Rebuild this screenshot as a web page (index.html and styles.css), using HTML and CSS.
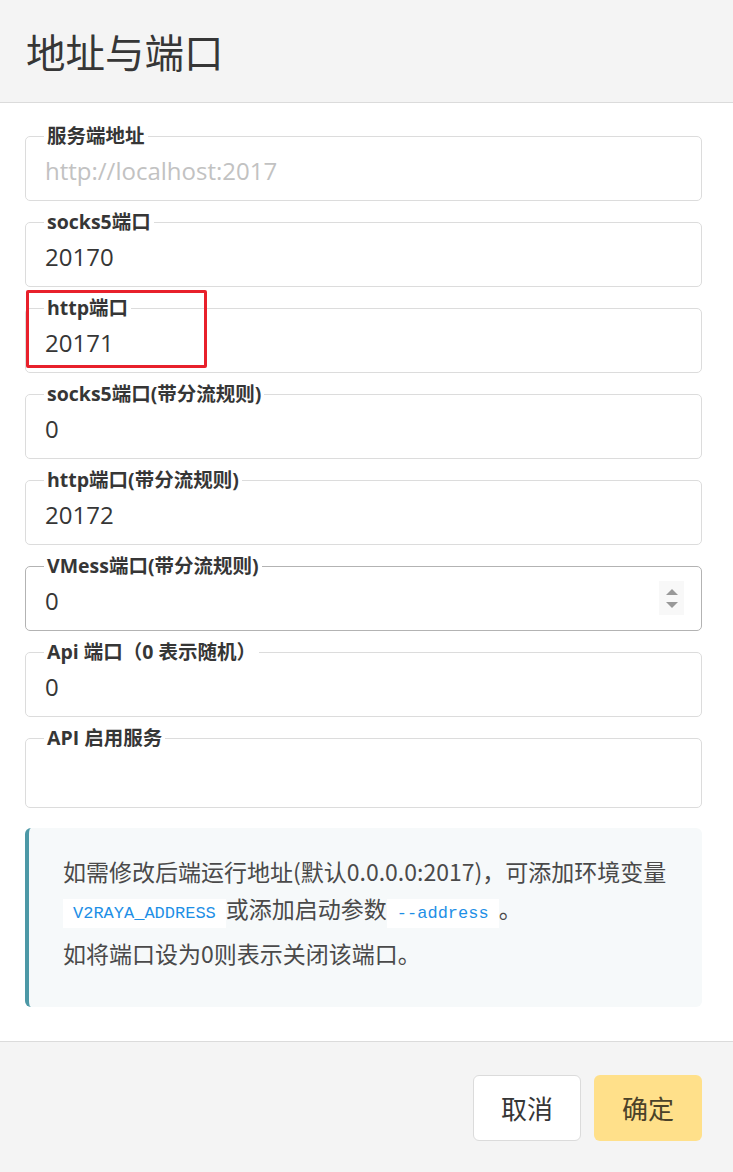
FILE: index.html
```html
<!DOCTYPE html>
<html lang="zh-CN">
<head>
<meta charset="utf-8">
<title>地址与端口</title>
<link rel="stylesheet" href="styles.css">
</head>
<body>
<div class="modal">
  <header class="modal-head">
    <h1 class="modal-title">地址与端口</h1>
  </header>
  <section class="modal-body">
    <fieldset class="field">
      <legend class="field-label">服务端地址</legend>
      <input class="field-input" type="text" placeholder="http://localhost:2017">
    </fieldset>
    <fieldset class="field">
      <legend class="field-label">socks5端口</legend>
      <input class="field-input" type="text" value="20170">
    </fieldset>
    <fieldset class="field">
      <legend class="field-label">http端口</legend>
      <input class="field-input" type="text" value="20171">
    </fieldset>
    <fieldset class="field">
      <legend class="field-label">socks5端口(带分流规则)</legend>
      <input class="field-input" type="text" value="0">
    </fieldset>
    <fieldset class="field">
      <legend class="field-label">http端口(带分流规则)</legend>
      <input class="field-input" type="text" value="20172">
    </fieldset>
    <fieldset class="field field-active">
      <legend class="field-label">VMess端口(带分流规则)</legend>
      <div class="input-row">
        <input class="field-input" type="text" value="0">
        <div class="spinner">
          <span class="spin-up"></span>
          <span class="spin-down"></span>
        </div>
      </div>
    </fieldset>
    <fieldset class="field">
      <legend class="field-label">Api 端口（0 表示随机）</legend>
      <input class="field-input" type="text" value="0">
    </fieldset>
    <fieldset class="field field-last">
      <legend class="field-label">API 启用服务</legend>
      <div class="field-empty"></div>
    </fieldset>
    <div class="notification">
      <p>如需修改后端运行地址(默认0.0.0.0:2017)，可添加环境变量<br><code class="code">V2RAYA_ADDRESS</code>或添加启动参数<code class="code">--address</code>。</p>
      <p>如将端口设为0则表示关闭该端口。</p>
    </div>
    <div class="highlight"></div>
  </section>
  <footer class="modal-foot">
    <button class="btn btn-cancel" type="button">取消</button>
    <button class="btn btn-confirm" type="button">确定</button>
  </footer>
</div>
</body>
</html>
```
FILE: styles.css
```css
html, body {
  margin: 0;
  padding: 0;
  background: #ffffff;
}
body {
  font-family: "Open Sans", "Noto Sans CJK SC", sans-serif;
  color: #363636;
}
.modal {
  width: 733px;
  height: 1172px;
  display: flex;
  flex-direction: column;
  overflow: hidden;
}
.modal-head {
  flex: none;
  height: 102px;
  background: #f4f4f4;
  border-bottom: 1px solid #dbdbdb;
  display: flex;
  align-items: center;
  padding-left: 26px;
}
.modal-title {
  margin: 0;
  font-family: "Noto Sans CJK SC", sans-serif;
  font-weight: 400;
  font-size: 39.5px;
  line-height: 1;
  color: #363636;
}
.modal-body {
  flex: none;
  position: relative;
  height: 938px;
  box-sizing: border-box;
  padding: 21px 31px 0 25px;
  background: #ffffff;
}
.field {
  margin: 0 0 9px 0;
  padding: 0 0 8px 0;
  border: 1px solid #dcdcdc;
  border-radius: 5px;
  min-width: 0;
}
.field-active {
  border-color: #b3b3b3;
}
.field-last {
  margin-bottom: 20px;
}
.field-label {
  margin-left: 18px;
  padding: 0 3px;
  font-family: "Open Sans", "Noto Sans CJK SC", sans-serif;
  font-weight: 700;
  font-size: 19.5px;
  line-height: 24px;
  color: #363636;
}
.field-input {
  display: block;
  width: 100%;
  box-sizing: border-box;
  height: 44px;
  margin: 0;
  padding: 0 19px;
  border: none;
  outline: none;
  background: transparent;
  font-family: "Open Sans", "Noto Sans CJK SC", sans-serif;
  font-size: 24px;
  color: #363636;
}
.field-input::placeholder {
  color: #c2c2c2;
  opacity: 1;
}
.field-empty {
  height: 49px;
}
.input-row {
  display: flex;
  align-items: center;
}
.input-row .field-input {
  flex: 1;
  min-width: 0;
}
.spinner {
  width: 25px;
  height: 34px;
  margin-right: 17px;
  margin-top: -4px;
  background: #f8f8f8;
  display: flex;
  flex-direction: column;
  align-items: center;
  justify-content: center;
  gap: 7px;
}
.spin-up {
  width: 0;
  height: 0;
  border-left: 6px solid transparent;
  border-right: 6px solid transparent;
  border-bottom: 6px solid #999999;
}
.spin-down {
  width: 0;
  height: 0;
  border-left: 6px solid transparent;
  border-right: 6px solid transparent;
  border-top: 6px solid #999999;
}
.notification {
  background: #f6f9fa;
  border-left: 4px solid #4c98a6;
  border-radius: 6px;
  padding: 25px 16px 35px 34px;
  font-family: "Noto Sans CJK SC", sans-serif;
  font-size: 23px;
  line-height: 37px;
  color: #4a4a4a;
}
.notification p {
  margin: 0;
}
.notification p + p {
  margin-top: 8px;
}
.code {
  font-family: "Liberation Mono", monospace;
  font-size: 17px;
  line-height: 1;
  color: #1e8fe6;
  background: #ffffff;
  padding: 5px 10px;
}
.highlight {
  position: absolute;
  top: 187px;
  left: 26px;
  width: 181px;
  height: 78px;
  box-sizing: border-box;
  border: 3px solid #e8202b;
  border-radius: 2px;
}
.modal-foot {
  flex: 1;
  background: #f4f4f4;
  border-top: 1px solid #dbdbdb;
  display: flex;
  justify-content: flex-end;
  align-items: flex-start;
  gap: 13px;
  padding: 33px 31px 0 0;
}
.btn {
  height: 66px;
  box-sizing: border-box;
  border-radius: 6px;
  font-family: "Noto Sans CJK SC", sans-serif;
  font-size: 26px;
  line-height: 1;
  cursor: pointer;
}
.btn-cancel {
  width: 108px;
  background: #ffffff;
  border: 1px solid #dbdbdb;
  color: #363636;
}
.btn-confirm {
  width: 108px;
  background: #ffe08a;
  border: 1px solid transparent;
  color: #4b4229;
}
```
